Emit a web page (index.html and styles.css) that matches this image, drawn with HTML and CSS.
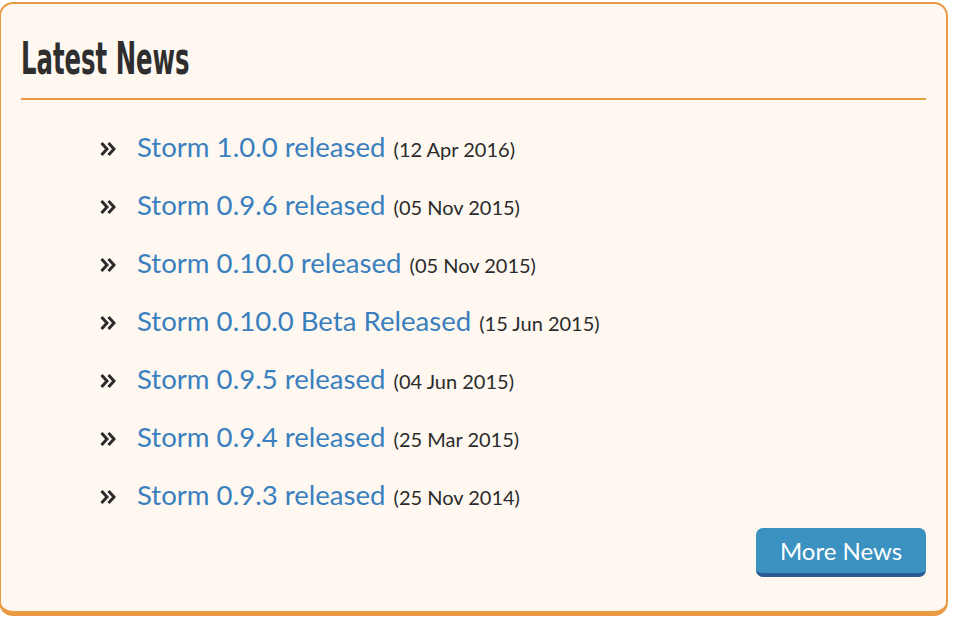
FILE: index.html
```html
<!DOCTYPE html>
<html lang="en">
<head>
    <meta charset="UTF-8">
    <meta name="viewport" content="width=device-width, initial-scale=1.0">
    <title>Latest News</title>
    <link rel="stylesheet" href="styles.css">
</head>
<body>
    <div class="news-box">
        <h2 class="news-title"><span>Latest News</span></h2>
        <ul class="news-list">
            <li><span class="arrow"><svg width="16" height="16" viewBox="0 0 16 16"><path d="M1.5 2 L7 8 L1.5 14 M8.5 2 L14 8 L8.5 14" fill="none" stroke="#2b2b2b" stroke-width="3"/></svg></span><a href="#">Storm 1.0.0 released</a> <span class="date">(12 Apr 2016)</span></li>
            <li><span class="arrow"><svg width="16" height="16" viewBox="0 0 16 16"><path d="M1.5 2 L7 8 L1.5 14 M8.5 2 L14 8 L8.5 14" fill="none" stroke="#2b2b2b" stroke-width="3"/></svg></span><a href="#">Storm 0.9.6 released</a> <span class="date">(05 Nov 2015)</span></li>
            <li><span class="arrow"><svg width="16" height="16" viewBox="0 0 16 16"><path d="M1.5 2 L7 8 L1.5 14 M8.5 2 L14 8 L8.5 14" fill="none" stroke="#2b2b2b" stroke-width="3"/></svg></span><a href="#">Storm 0.10.0 released</a> <span class="date">(05 Nov 2015)</span></li>
            <li><span class="arrow"><svg width="16" height="16" viewBox="0 0 16 16"><path d="M1.5 2 L7 8 L1.5 14 M8.5 2 L14 8 L8.5 14" fill="none" stroke="#2b2b2b" stroke-width="3"/></svg></span><a href="#">Storm 0.10.0 Beta Released</a> <span class="date">(15 Jun 2015)</span></li>
            <li><span class="arrow"><svg width="16" height="16" viewBox="0 0 16 16"><path d="M1.5 2 L7 8 L1.5 14 M8.5 2 L14 8 L8.5 14" fill="none" stroke="#2b2b2b" stroke-width="3"/></svg></span><a href="#">Storm 0.9.5 released</a> <span class="date">(04 Jun 2015)</span></li>
            <li><span class="arrow"><svg width="16" height="16" viewBox="0 0 16 16"><path d="M1.5 2 L7 8 L1.5 14 M8.5 2 L14 8 L8.5 14" fill="none" stroke="#2b2b2b" stroke-width="3"/></svg></span><a href="#">Storm 0.9.4 released</a> <span class="date">(25 Mar 2015)</span></li>
            <li><span class="arrow"><svg width="16" height="16" viewBox="0 0 16 16"><path d="M1.5 2 L7 8 L1.5 14 M8.5 2 L14 8 L8.5 14" fill="none" stroke="#2b2b2b" stroke-width="3"/></svg></span><a href="#">Storm 0.9.3 released</a> <span class="date">(25 Nov 2014)</span></li>
        </ul>
        <div class="news-footer">
            <a href="#" class="button">More News</a>
        </div>
    </div>
</body>
</html>
```

FILE: styles.css
```css
body {
    margin: 0;
    background: #fff;
    font-family: Lato, "Open Sans", sans-serif;
    color: #333;
}
.news-box {
    box-sizing: border-box;
    margin: 2px 0 0 -1px;
    width: 949px;
    height: 614px;
    padding: 27px 20px 0 20px;
    background: #fef8f1;
    border: 2px solid #e99a42;
    border-bottom-width: 5px;
    border-radius: 14px;
}
.news-title {
    margin: 0;
    padding: 0 0 11px 0;
    font-family: "DejaVu Sans Condensed", "DejaVu Sans", sans-serif;
    font-size: 44px;
    font-weight: bold;
    line-height: 56px;
    color: #2e2e2e;
    border-bottom: 2px solid #e99a42;
}
.news-title span {
    display: inline-block;
    transform: scaleX(0.615);
    transform-origin: left center;
}
.news-list {
    list-style: none;
    margin: 18px 0 0 0;
    padding: 0 0 0 79px;
}
.news-list li {
    display: flex;
    align-items: baseline;
    height: 58px;
    line-height: 58px;
}
.arrow {
    width: 37px;
}
.news-list a {
    font-size: 27.6px;
    color: #3a7fbe;
    text-decoration: none;
    margin-right: 8px;
}
.date {
    font-size: 20px;
    color: #2b2b2b;
}
.news-footer {
    display: flex;
    justify-content: flex-end;
    margin-top: 4px;
}
.button {
    display: block;
    width: 170px;
    height: 45px;
    line-height: 45px;
    text-align: center;
    background: #3b91c0;
    border-bottom: 4px solid #2b5d94;
    border-radius: 7px;
    color: #fff;
    font-size: 24px;
    text-decoration: none;
}
```
